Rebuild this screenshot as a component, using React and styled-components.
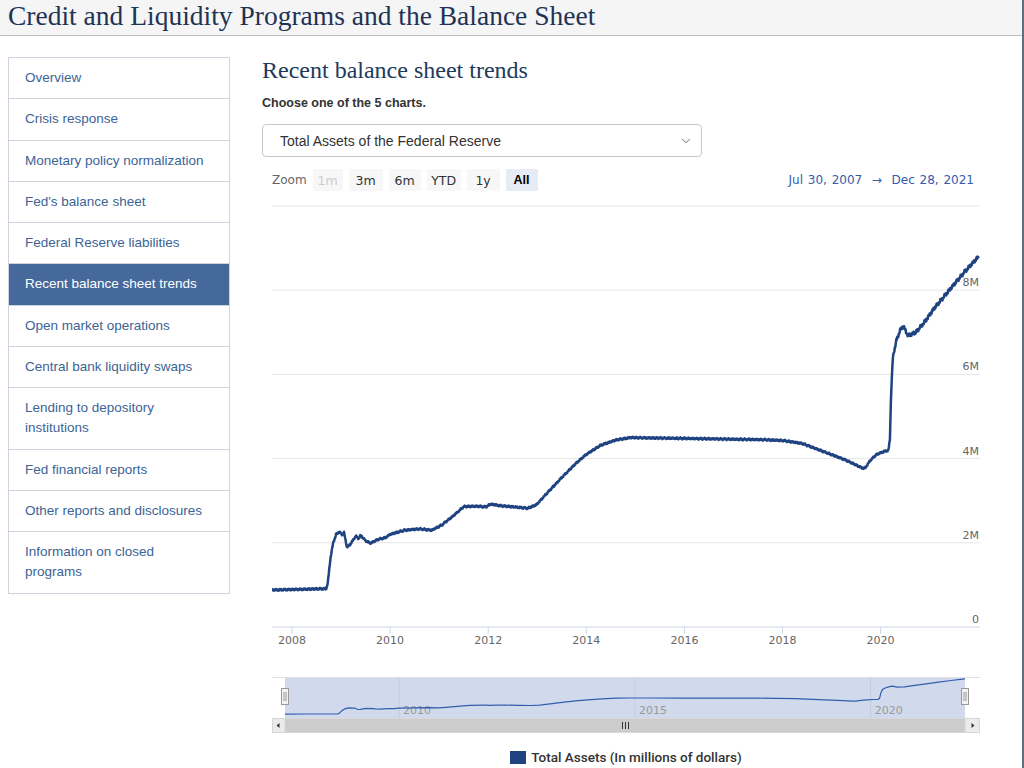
import styled, { createGlobalStyle } from "styled-components";
import { ChevronDown } from "lucide-react";

const GlobalStyle = createGlobalStyle`
  body { margin: 0; background: #fff; }
  * { box-sizing: border-box; }
`;

const Page = styled.div`
  width: 1024px;
  min-height: 768px;
  border-right: 2px solid #5f6d86;
  font-family: "Liberation Sans", Arial, sans-serif;
`;

const Header = styled.header`
  height: 36px;
  background: #f5f5f5;
  border-bottom: 1px solid #bdbdbd;
  padding-left: 8px;
`;

const Title = styled.h1`
  margin: 0;
  font-family: "Liberation Serif", "Times New Roman", serif;
  font-weight: normal;
  font-size: 27.5px;
  line-height: 32px;
  color: #1f3354;
`;

const Body = styled.div`
  display: flex;
  align-items: flex-start;
  gap: 32px;
  padding: 21px 0 0 8px;
`;

const Sidebar = styled.nav`
  width: 222px;
  border: 1px solid #cdd4dd;
  border-bottom: none;
`;

const NavItem = styled.a`
  display: block;
  padding: 10px 16px 10.3px;
  font-size: 13.5px;
  line-height: 20px;
  border-bottom: 1px solid #cdd4dd;
  color: ${(p) => (p.$active ? "#fff" : "#3c6496")};
  background: ${(p) => (p.$active ? "#46699b" : "#fff")};
  text-decoration: none;
`;

const Main = styled.main`
  width: 728px;
`;

const Heading = styled.h2`
  margin: 0;
  font-family: "Liberation Serif", "Times New Roman", serif;
  font-weight: normal;
  font-size: 24px;
  line-height: 26px;
  color: #213a5c;
`;

const Prompt = styled.p`
  margin: 12px 0 0;
  font-size: 12.5px;
  line-height: 16px;
  font-weight: bold;
  color: #333;
`;

const SelectBox = styled.div`
  margin-top: 13px;
  width: 440px;
  height: 33px;
  border: 1px solid #c8c8c8;
  border-radius: 4px;
  display: flex;
  align-items: center;
  justify-content: space-between;
  padding: 0 8px 0 17px;
  font-size: 14px;
  color: #333;
`;

const Toolbar = styled.div`
  margin-top: 12px;
  height: 22px;
  display: flex;
  align-items: center;
  justify-content: space-between;
  padding: 0 16px 0 10px;
  font-family: "DejaVu Sans", Verdana, sans-serif;
`;

const ZoomGroup = styled.div`
  display: flex;
  align-items: center;
  gap: 6px;
`;

const ZoomLabel = styled.span`
  font-size: 12px;
  color: #666;
`;

const ZoomButton = styled.span`
  width: ${(p) => p.$w || 32}px;
  height: 22px;
  display: flex;
  align-items: center;
  justify-content: center;
  font-size: 12.5px;
  background: ${(p) => (p.$selected ? "#e6ebf5" : "#f7f7f7")};
  color: ${(p) => (p.$disabled ? "#cccccc" : p.$selected ? "#000" : "#333")};
  font-weight: ${(p) => (p.$selected ? "bold" : "normal")};
  font-family: ${(p) => (p.$selected ? '"Liberation Sans", Arial, sans-serif' : "inherit")};
`;

const Range = styled.span`
  font-size: 12px;
  color: #335cad;
  word-spacing: 1px;
`;

const ChartSvg = styled.svg`
  display: block;
  margin-top: 4px;
  font-family: "DejaVu Sans", Verdana, sans-serif;
`;

const Legend = styled.div`
  margin-top: 9px;
  display: flex;
  justify-content: center;
  align-items: center;
  gap: 5px;
  font-family: Roboto, "Liberation Sans", sans-serif;
  font-weight: 500;
  font-size: 13.5px;
  line-height: 16px;
  color: #333;
`;

const Swatch = styled.span`
  width: 16px;
  height: 13px;
  background: #1f4381;
`;

const NAV = [
  "Overview",
  "Crisis response",
  "Monetary policy normalization",
  "Fed's balance sheet",
  "Federal Reserve liabilities",
  "Recent balance sheet trends",
  "Open market operations",
  "Central bank liquidity swaps",
  "Lending to depository institutions",
  "Fed financial reports",
  "Other reports and disclosures",
  "Information on closed programs",
];

const KEY = [
  [2007.58, 0.88], [2008.0, 0.89], [2008.35, 0.9], [2008.7, 0.91], [2008.73, 1.05],
  [2008.78, 1.6], [2008.84, 2.0], [2008.9, 2.2], [2008.96, 2.26], [2009.02, 2.2],
  [2009.06, 2.24], [2009.12, 1.9], [2009.18, 1.95], [2009.3, 2.16], [2009.36, 2.1],
  [2009.4, 2.18], [2009.5, 2.05], [2009.6, 1.99], [2009.75, 2.08], [2009.9, 2.12],
  [2010.0, 2.2], [2010.3, 2.3], [2010.6, 2.33], [2010.85, 2.3], [2011.05, 2.42],
  [2011.3, 2.65], [2011.5, 2.86], [2011.8, 2.87], [2011.95, 2.85], [2012.05, 2.92],
  [2012.25, 2.88], [2012.55, 2.85], [2012.8, 2.82], [2012.98, 2.9], [2013.2, 3.18],
  [2013.5, 3.55], [2013.8, 3.9], [2014.0, 4.1], [2014.3, 4.32], [2014.6, 4.44],
  [2014.9, 4.5], [2015.3, 4.49], [2016.0, 4.48], [2017.0, 4.46], [2017.6, 4.45],
  [2018.0, 4.43], [2018.4, 4.36], [2018.9, 4.14], [2019.3, 3.96], [2019.62, 3.78],
  [2019.68, 3.77], [2019.8, 3.97], [2019.92, 4.1], [2020.05, 4.16], [2020.16, 4.2],
  [2020.19, 4.45], [2020.215, 5.6], [2020.25, 6.4], [2020.32, 6.8], [2020.4, 7.05],
  [2020.46, 7.15], [2020.56, 6.92], [2020.72, 7.0], [2020.9, 7.25], [2021.1, 7.58],
  [2021.4, 8.0], [2021.7, 8.42], [2022.0, 8.8],
];

// chart svg sits at page (262, 195); helpers take page coordinates
const OX = 262;
const OY = 195;
const px = (x) => x - OX;
const py = (y) => y - OY;

const mainX = (t) => px(292 + (t - 2008) * 49.05);
const mainY = (v) => py(627 - v * 42.1);
const navX = (t) => px(285 + (t - 2007.58) * 47.156);
const navY = (v) => py(718 - v * 4.45);

function interp(t) {
  for (let i = 1; i < KEY.length; i++) {
    if (t <= KEY[i][0]) {
      const [t0, v0] = KEY[i - 1];
      const [t1, v1] = KEY[i];
      return v0 + ((t - t0) / (t1 - t0)) * (v1 - v0);
    }
  }
  return KEY[KEY.length - 1][1];
}

function mainPath() {
  const pts = [];
  let i = 0;
  for (let t = 2007.58; t <= 2022.0001; t += 0.01, i++) {
    const v = interp(t);
    const amp = v > 5 ? 0.05 : 0.024;
    const j = amp * (Math.sin(i * 2.3) * 0.6 + Math.sin(i * 0.77) * 0.4);
    pts.push(`${mainX(t).toFixed(1)},${mainY(v + j).toFixed(1)}`);
  }
  return "M" + pts.join("L");
}

const navPath = "M" + KEY.map(([t, v]) => `${navX(t).toFixed(1)},${navY(v).toFixed(1)}`).join("L");

const GRID = [2, 4, 6, 8, 10];
const YEARS = [2008, 2010, 2012, 2014, 2016, 2018, 2020];
const NAV_YEARS = [2010, 2015, 2020];

function Chart() {
  const left = px(272);
  const right = px(980);
  const maskL = px(285);
  const maskR = px(965);
  return (
    <ChartSvg width="728" height="545">
      <defs>
        <clipPath id="plot">
          <rect x={left} y={py(200)} width={right - left} height={py(630) - py(200)} />
        </clipPath>
      </defs>
      {GRID.map((g) => (
        <line key={g} x1={left} x2={right} y1={mainY(g)} y2={mainY(g)} stroke="#e6e6e6" />
      ))}
      {GRID.slice(0, 4).map((g) => (
        <text key={g} x={px(979)} y={mainY(g) - 4} fontSize="11" fill="#666" textAnchor="end">
          {g}M
        </text>
      ))}
      <text x={px(979)} y={mainY(0) - 4} fontSize="11" fill="#666" textAnchor="end">0</text>
      <line x1={left} x2={right} y1={mainY(0)} y2={mainY(0)} stroke="#ccd6eb" />
      {YEARS.map((y) => (
        <g key={y}>
          <line x1={mainX(y)} x2={mainX(y)} y1={mainY(0)} y2={mainY(0) + 7} stroke="#ccd6eb" />
          <text x={mainX(y)} y={py(644)} fontSize="11" fill="#666" textAnchor="middle">{y}</text>
        </g>
      ))}
      <path d={mainPath()} fill="none" stroke="#1f4381" strokeWidth="2.5" strokeLinejoin="round" clipPath="url(#plot)" />

      {/* navigator */}
      <line x1={left} x2={right} y1={py(677.5)} y2={py(677.5)} stroke="#e0e0e0" />
      <rect x={maskL} y={py(678)} width={maskR - maskL} height={py(718) - py(678)} fill="rgba(102,133,194,0.3)" />
      {NAV_YEARS.map((y) => (
        <g key={y}>
          <line x1={navX(y)} x2={navX(y)} y1={py(678)} y2={py(718)} stroke="#c4cbdb" />
          <text x={navX(y) + 4} y={py(714)} fontSize="11" fill="#999">{y}</text>
        </g>
      ))}
      <path d={navPath} fill="none" stroke="#335cad" strokeWidth="1.2" />
      {[maskL, maskR].map((hx) => (
        <g key={hx}>
          <rect x={hx - 3.5} y={py(688.5)} width="7" height="16" fill="#f2f2f2" stroke="#999" />
          <line x1={hx - 1} x2={hx - 1} y1={py(692)} y2={py(701)} stroke="#999" />
          <line x1={hx + 1} x2={hx + 1} y1={py(692)} y2={py(701)} stroke="#999" />
        </g>
      ))}

      {/* scrollbar */}
      <rect x={left + 0.5} y={py(718.5)} width={right - left - 1} height="14" fill="#f2f2f2" stroke="#e6e6e6" />
      <rect x={maskL} y={py(718.5)} width={maskR - maskL} height="14" fill="#cccccc" />
      <rect x={left + 0.5} y={py(718.5)} width={maskL - left - 0.5} height="14" fill="#ebebeb" stroke="#d6d6d6" />
      <rect x={maskR} y={py(718.5)} width={right - maskR - 0.5} height="14" fill="#ebebeb" stroke="#d6d6d6" />
      <path d={`M${px(276.5)},${py(725.5)}L${px(279.5)},${py(723)}L${px(279.5)},${py(728)}Z`} fill="#333" />
      <path d={`M${px(974.5)},${py(725.5)}L${px(971.5)},${py(723)}L${px(971.5)},${py(728)}Z`} fill="#333" />
      {[-3, 0, 3].map((d) => (
        <line key={d} x1={px(625.5 + d)} x2={px(625.5 + d)} y1={py(722)} y2={py(729)} stroke="#333" />
      ))}
    </ChartSvg>
  );
}

export default function App() {
  return (
    <Page>
      <GlobalStyle />
      <Header>
        <Title>Credit and Liquidity Programs and the Balance Sheet</Title>
      </Header>
      <Body>
        <Sidebar>
          {NAV.map((n) => (
            <NavItem key={n} href="#" $active={n === "Recent balance sheet trends"}>
              {n}
            </NavItem>
          ))}
        </Sidebar>
        <Main>
          <Heading>Recent balance sheet trends</Heading>
          <Prompt>Choose one of the 5 charts.</Prompt>
          <SelectBox>
            <span>Total Assets of the Federal Reserve</span>
            <ChevronDown size={14} color="#555" strokeWidth={1.5} />
          </SelectBox>
          <Toolbar>
            <ZoomGroup>
              <ZoomLabel>Zoom</ZoomLabel>
              <ZoomButton $w={30} $disabled>1m</ZoomButton>
              <ZoomButton $w={34}>3m</ZoomButton>
              <ZoomButton>6m</ZoomButton>
              <ZoomButton $w={34}>YTD</ZoomButton>
              <ZoomButton $w={33}>1y</ZoomButton>
              <ZoomButton $selected>All</ZoomButton>
            </ZoomGroup>
            <Range>Jul 30, 2007 &nbsp;→&nbsp; Dec 28, 2021</Range>
          </Toolbar>
          <Chart />
          <Legend>
            <Swatch />
            Total Assets (In millions of dollars)
          </Legend>
        </Main>
      </Body>
    </Page>
  );
}
